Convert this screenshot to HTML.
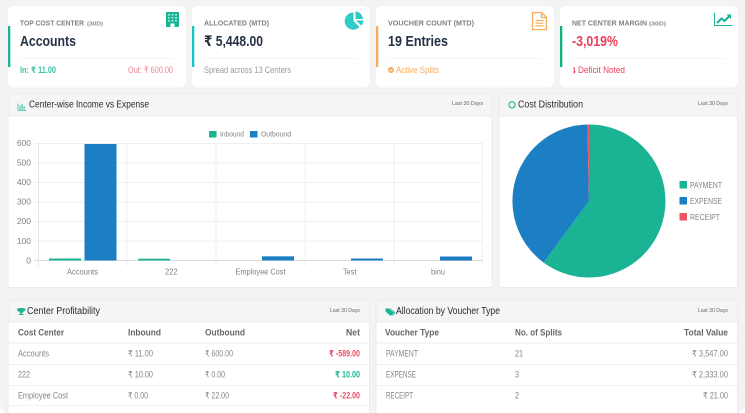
<!DOCTYPE html>
<html><head><meta charset="utf-8">
<style>
html,body{margin:0;padding:0;width:745px;height:413px;overflow:hidden;background:#fff}
svg{display:block;filter:blur(.25px)}
text{font-family:"Liberation Sans","DejaVu Sans",sans-serif}
.lb{font-size:7.5px;font-weight:700;fill:#808080}
.sm{font-size:5.5px;font-weight:700;fill:#888}
.big{font-size:14.5px;font-weight:700;fill:#243044}
.t{font-size:10px;fill:#2a2a2a}
.ld{font-size:5.5px;fill:#666}
.th{font-size:9px;font-weight:700;fill:#666}
.td{font-size:9px;fill:#868686}
.ax{font-size:8.5px;fill:#808080}
.g{stroke:#efefef;stroke-width:1;fill:none}
.hd{fill:#f5f5f5}
.ln{stroke:#ececec;stroke-width:1}
</style></head><body>
<svg width="745" height="413" viewBox="0 0 745 413" xmlns="http://www.w3.org/2000/svg">
<rect x="0" y="-10" width="745" height="423" rx="8" fill="#f3f3f3"/>

<!-- KPI cards -->
<g fill="#fff">
<rect x="8" y="6" width="178" height="81.5" rx="6"/>
<rect x="192" y="6" width="177.5" height="81.5" rx="6"/>
<rect x="376" y="6" width="178" height="81.5" rx="6"/>
<rect x="560" y="6" width="178" height="81.5" rx="6"/>
</g>
<rect x="8" y="26" width="2.3" height="41" fill="#1ab394"/>
<rect x="192" y="26" width="2.3" height="41" fill="#17c3c3"/>
<rect x="376" y="26" width="2.3" height="41" fill="#f8ac59"/>
<rect x="560" y="26" width="2.3" height="41" fill="#10b083"/>
<g>
<line x1="20" x2="173" y1="58.5" y2="58.5" stroke="#f5f5f5"/>
<line x1="204" x2="357" y1="58.5" y2="58.5" stroke="#f5f5f5"/>
<line x1="388" x2="541" y1="58.5" y2="58.5" stroke="#f5f5f5"/>
<line x1="572" x2="725" y1="58.5" y2="58.5" stroke="#f5f5f5"/>
</g>

<text class="lb" x="20" y="25.5" textLength="64" lengthAdjust="spacingAndGlyphs">TOP COST CENTER</text>
<text class="sm" x="87" y="25.5" textLength="16" lengthAdjust="spacingAndGlyphs">(30D)</text>
<text class="big" x="20" y="46" textLength="56" lengthAdjust="spacingAndGlyphs">Accounts</text>
<text x="20" y="73" font-size="9" font-weight="700" fill="#3cc0a6" textLength="36" lengthAdjust="spacingAndGlyphs">In: ₹ 11.00</text>
<text x="128" y="73" font-size="9" fill="#f27f92" textLength="45" lengthAdjust="spacingAndGlyphs">Out: ₹ 600.00</text>

<text class="lb" x="204" y="25.5" textLength="65" lengthAdjust="spacingAndGlyphs">ALLOCATED (MTD)</text>
<text class="big" x="204" y="46" textLength="59" lengthAdjust="spacingAndGlyphs">₹ 5,448.00</text>
<text x="204" y="73" font-size="9" fill="#999" textLength="87" lengthAdjust="spacingAndGlyphs">Spread across 13 Centers</text>

<text class="lb" x="388" y="25.5" textLength="86" lengthAdjust="spacingAndGlyphs">VOUCHER COUNT (MTD)</text>
<text class="big" x="388" y="46" textLength="60" lengthAdjust="spacingAndGlyphs">19 Entries</text>
<circle cx="391" cy="70" r="3" fill="#f8ac59"/>
<path d="M389.6 70l1 1 1.8-1.9" stroke="#fff" stroke-width=".8" fill="none"/>
<text x="396" y="73" font-size="9" fill="#f8ac59" textLength="43" lengthAdjust="spacingAndGlyphs">Active Splits</text>

<text class="lb" x="572" y="25.5" textLength="75" lengthAdjust="spacingAndGlyphs">NET CENTER MARGIN</text>
<text class="sm" x="649" y="25.5" textLength="17" lengthAdjust="spacingAndGlyphs">(30D)</text>
<text x="572" y="46" font-size="14.5" font-weight="700" fill="#ed3f5a" textLength="46" lengthAdjust="spacingAndGlyphs">-3,019%</text>
<path d="M573 67.500h1.800v4h1.200l-1.600 2-1.600-2h1v-3h-.8z" fill="#ed3f5a"/>
<text x="578" y="73" font-size="9" fill="#ed3f5a" textLength="47" lengthAdjust="spacingAndGlyphs">Deficit Noted</text>

<!-- KPI icons -->
<rect x="166" y="12" width="13" height="15" rx=".6" fill="#1ab394"/>
<g fill="#a6e5d8">
<rect x="168" y="14" width="2" height="1.600"/><rect x="171.500" y="14" width="2" height="1.600"/><rect x="175" y="14" width="2" height="1.600"/>
<rect x="168" y="17" width="2" height="1.600"/><rect x="171.500" y="17" width="2" height="1.600"/><rect x="175" y="17" width="2" height="1.600"/>
<rect x="168" y="20" width="2" height="1.600"/><rect x="171.500" y="20" width="2" height="1.600"/><rect x="175" y="20" width="2" height="1.600"/>
</g>
<rect x="170.500" y="23.500" width="4" height="3.500" fill="#fff"/>

<path d="M353.500 12.500v8.500l6 6a8.600 8.600 0 1 1-6-14.500z" fill="#2ecbc9"/>
<path d="M355.500 11.500a8 8 0 0 1 7.500 7.500h-7.500z" fill="#2ecbc9"/>
<path d="M356 20.500h7.500a8 8 0 0 1-2.200 5z" fill="#2ecbc9"/>

<path d="M532.500 12.500h9l5 5v12h-14z M541.500 12.500v5h5" fill="none" stroke="#f8ac59" stroke-width="1.300" stroke-linejoin="round"/>
<path d="M535.500 20.500h8M535.500 23.200h8M535.500 25.900h8" stroke="#f8ac59" stroke-width="1.200"/>

<path d="M714.500 13v12.500h18" fill="none" stroke="#1ab394" stroke-width="1"/>
<path d="M717 23l4.500-4.500 3 2.500 5-5" fill="none" stroke="#1ab394" stroke-width="2"/>
<path d="M726.500 14.500h4.500v4.500z" fill="#1ab394"/>

<!-- Chart panel -->
<rect x="8" y="94" width="484" height="193.500" rx="2" fill="#fff" stroke="#ebebeb" stroke-width="1"/>
<rect x="8.500" y="94.500" width="483" height="21.500" class="hd"/>
<line x1="8" x2="492" y1="116" y2="116" stroke="#ebebeb"/>
<g fill="#5cc9b2">
<rect x="17.500" y="103.500" width="1" height="6.500"/><rect x="19.500" y="105.500" width="1.200" height="4.500"/><rect x="21.500" y="104" width="1.200" height="6"/><rect x="23.500" y="106" width="1.200" height="4"/><rect x="17.500" y="110" width="9" height=".9"/>
</g>
<text class="t" x="29" y="107.500" textLength="120" lengthAdjust="spacingAndGlyphs">Center-wise Income vs Expense</text>
<text class="ld" x="452" y="105" textLength="31" lengthAdjust="spacingAndGlyphs">Last 30 Days</text>

<rect x="209" y="131" width="7.500" height="6.500" fill="#1ab394"/>
<text x="220" y="136.500" font-size="7.500" fill="#808080" textLength="24" lengthAdjust="spacingAndGlyphs">Inbound</text>
<rect x="250" y="131" width="7.500" height="6.500" fill="#1c7fc4"/>
<text x="261" y="136.500" font-size="7.500" fill="#808080" textLength="30" lengthAdjust="spacingAndGlyphs">Outbound</text>

<g class="g">
<path d="M34 143.500H482.500M34 163H482.500M34 182.500H482.500M34 202H482.500M34 221.500H482.500M34 241H482.500"/>
<path d="M127 143.500V266M216 143.500V266M305 143.500V266M394 143.500V266M482.500 143.500V266"/>
</g>
<path d="M38.500 143.500V266" stroke="#e6e6e6" fill="none"/>
<path d="M34 260.500H482.500" stroke="#dcdcdc" fill="none"/>

<g fill="#1ab394">
<rect x="49" y="258.500" width="32" height="2"/>
<rect x="138" y="258.700" width="32" height="1.800"/>
</g>
<g fill="#1c7fc4">
<rect x="84.500" y="144" width="32" height="116.500"/>
<rect x="262" y="256.300" width="32" height="4.200"/>
<rect x="351" y="258.500" width="32" height="2"/>
<rect x="440" y="256.500" width="32" height="4"/>
</g>

<g class="ax" text-anchor="end">
<text x="31" y="146">600</text><text x="31" y="165.500">500</text><text x="31" y="185">400</text><text x="31" y="204.500">300</text><text x="31" y="224">200</text><text x="31" y="244">100</text><text x="31" y="263.500">0</text>
</g>
<g class="ax">
<text x="67" y="274.500" textLength="31" lengthAdjust="spacingAndGlyphs">Accounts</text>
<text x="165" y="274.500" textLength="12.500" lengthAdjust="spacingAndGlyphs">222</text>
<text x="235.500" y="274.500" textLength="50" lengthAdjust="spacingAndGlyphs">Employee Cost</text>
<text x="343" y="274.500" textLength="13.500" lengthAdjust="spacingAndGlyphs">Test</text>
<text x="431" y="274.500" textLength="14" lengthAdjust="spacingAndGlyphs">binu</text>
</g>

<!-- Pie panel -->
<rect x="499" y="94" width="238.500" height="193.500" rx="2" fill="#fff" stroke="#ebebeb"/>
<rect x="499.500" y="94.500" width="237.500" height="21.500" class="hd"/>
<line x1="499" x2="738" y1="116" y2="116" stroke="#ebebeb"/>
<circle cx="512" cy="104.800" r="3.100" fill="none" stroke="#1ab394" stroke-width="1.100"/>
<text class="t" x="518" y="107.500" textLength="65" lengthAdjust="spacingAndGlyphs">Cost Distribution</text>
<text class="ld" x="698" y="105" textLength="30" lengthAdjust="spacingAndGlyphs">Last 30 Days</text>

<path d="M589 201V124.500A76.500 76.500 0 1 1 543.600 262.600Z" fill="#1ab394"/>
<path d="M589 201L543.600 262.600A76.500 76.500 0 0 1 587.300 124.500Z" fill="#1c7fc4"/>
<path d="M589 201L587.300 124.500L589 124.500Z" fill="#ed5565"/>

<rect x="679.500" y="181" width="7.500" height="7.500" fill="#1ab394"/>
<rect x="679.500" y="197" width="7.500" height="7.500" fill="#1c7fc4"/>
<rect x="679.500" y="213" width="7.500" height="7.500" fill="#ed5565"/>
<g font-size="8" fill="#808080">
<text x="690" y="188" textLength="32" lengthAdjust="spacingAndGlyphs">PAYMENT</text>
<text x="690" y="204" textLength="32" lengthAdjust="spacingAndGlyphs">EXPENSE</text>
<text x="690" y="220" textLength="30" lengthAdjust="spacingAndGlyphs">RECEIPT</text>
</g>

<!-- Left table -->
<rect x="8" y="300" width="361.500" height="120" rx="2" fill="#fff" stroke="#ebebeb"/>
<rect x="8.500" y="300.500" width="360.500" height="21.500" class="hd"/>
<line x1="8" x2="369.500" y1="322" y2="322" stroke="#ebebeb"/>
<path d="M19 308h4.500v2.500c0 1.500-.8 2.300-1.500 2.500v1h1.500v1h-4.500v-1h1.500v-1c-.7-.2-1.500-1-1.500-2.500zM19 308.500h-2c0 2 .8 3 2 3.200zM23.500 308.500h2c0 2-.8 3-2 3.200z" fill="#1ab394"/>
<text class="t" x="27" y="314" textLength="73" lengthAdjust="spacingAndGlyphs">Center Profitability</text>
<text class="ld" x="330" y="312" textLength="30" lengthAdjust="spacingAndGlyphs">Last 30 Days</text>
<g>
<line x1="9" x2="369" y1="343" y2="343" stroke="#ececec"/><line x1="9" x2="369" y1="364.500" y2="364.500" stroke="#f1f1f1"/><line x1="9" x2="369" y1="385.500" y2="385.500" stroke="#f1f1f1"/><line x1="9" x2="369" y1="405.500" y2="405.500" stroke="#f1f1f1"/>
</g>
<text class="th" x="18" y="335.500" textLength="46" lengthAdjust="spacingAndGlyphs">Cost Center</text>
<text class="th" x="128" y="335.500" textLength="33" lengthAdjust="spacingAndGlyphs">Inbound</text>
<text class="th" x="205" y="335.500" textLength="40" lengthAdjust="spacingAndGlyphs">Outbound</text>
<text class="th" x="346" y="335.500" textLength="14" lengthAdjust="spacingAndGlyphs">Net</text>

<text class="td" x="18" y="356.500" textLength="31" lengthAdjust="spacingAndGlyphs">Accounts</text>
<text class="td" x="128" y="356.500" textLength="25" lengthAdjust="spacingAndGlyphs">₹ 11.00</text>
<text class="td" x="205" y="356.500" textLength="28" lengthAdjust="spacingAndGlyphs">₹ 600.00</text>
<text x="329" y="356.500" font-size="9" font-weight="700" fill="#f04a63" textLength="31" lengthAdjust="spacingAndGlyphs">₹ -589.00</text>

<text class="td" x="18" y="377.500" textLength="12" lengthAdjust="spacingAndGlyphs">222</text>
<text class="td" x="128" y="377.500" textLength="25" lengthAdjust="spacingAndGlyphs">₹ 10.00</text>
<text class="td" x="205" y="377.500" textLength="20" lengthAdjust="spacingAndGlyphs">₹ 0.00</text>
<text x="335" y="377.500" font-size="9" font-weight="700" fill="#1ab394" textLength="25" lengthAdjust="spacingAndGlyphs">₹ 10.00</text>

<text class="td" x="18" y="398.500" textLength="50" lengthAdjust="spacingAndGlyphs">Employee Cost</text>
<text class="td" x="128" y="398.500" textLength="20" lengthAdjust="spacingAndGlyphs">₹ 0.00</text>
<text class="td" x="205" y="398.500" textLength="24" lengthAdjust="spacingAndGlyphs">₹ 22.00</text>
<text x="333" y="398.500" font-size="9" font-weight="700" fill="#f04a63" textLength="27" lengthAdjust="spacingAndGlyphs">₹ -22.00</text>

<!-- Right table -->
<rect x="376" y="300" width="361.500" height="120" rx="2" fill="#fff" stroke="#ebebeb"/>
<rect x="376.500" y="300.500" width="360.500" height="21.500" class="hd"/>
<line x1="376" x2="737.500" y1="322" y2="322" stroke="#ebebeb"/>
<path d="M385.500 308.500h4l4.500 4.300-3.300 3.200-5.200-4.500z" fill="#1ab394"/>
<path d="M391 308.500l4.500 4.300-3 3-.6-.5 2.500-2.500-4-4.300z" fill="#1ab394"/>
<text class="t" x="396" y="314" textLength="104" lengthAdjust="spacingAndGlyphs">Allocation by Voucher Type</text>
<text class="ld" x="698" y="312" textLength="30" lengthAdjust="spacingAndGlyphs">Last 30 Days</text>
<g>
<line x1="377" x2="737" y1="343" y2="343" stroke="#ececec"/><line x1="377" x2="737" y1="364.500" y2="364.500" stroke="#f1f1f1"/><line x1="377" x2="737" y1="385.500" y2="385.500" stroke="#f1f1f1"/>
</g>
<text class="th" x="385" y="335.500" textLength="54" lengthAdjust="spacingAndGlyphs">Voucher Type</text>
<text class="th" x="515" y="335.500" textLength="47" lengthAdjust="spacingAndGlyphs">No. of Splits</text>
<text class="th" x="684" y="335.500" textLength="44" lengthAdjust="spacingAndGlyphs">Total Value</text>

<text class="td" x="386" y="356.500" textLength="32" lengthAdjust="spacingAndGlyphs">PAYMENT</text>
<text class="td" x="515" y="356.500" textLength="8" lengthAdjust="spacingAndGlyphs">21</text>
<text class="td" x="692" y="356.500" textLength="36" lengthAdjust="spacingAndGlyphs">₹ 3,547.00</text>

<text class="td" x="386" y="377.500" textLength="30" lengthAdjust="spacingAndGlyphs">EXPENSE</text>
<text class="td" x="515" y="377.500" textLength="4" lengthAdjust="spacingAndGlyphs">3</text>
<text class="td" x="692" y="377.500" textLength="36" lengthAdjust="spacingAndGlyphs">₹ 2,333.00</text>

<text class="td" x="386" y="398.500" textLength="27" lengthAdjust="spacingAndGlyphs">RECEIPT</text>
<text class="td" x="515" y="398.500" textLength="4" lengthAdjust="spacingAndGlyphs">2</text>
<text class="td" x="703" y="398.500" textLength="25" lengthAdjust="spacingAndGlyphs">₹ 21.00</text>
</svg>
</body></html>
